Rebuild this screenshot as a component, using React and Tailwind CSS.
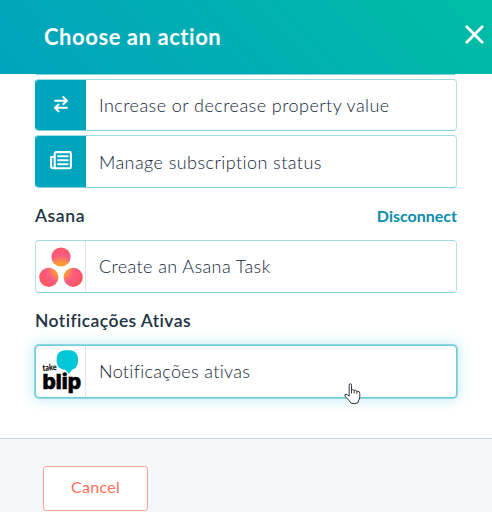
import React from "react";

function SwapIcon() {
  return (
    <svg className="mb-[3px]" width="16" height="20" viewBox="0 0 16 20" fill="none" stroke="#fff" strokeWidth="1.9" strokeLinecap="round" strokeLinejoin="round">
      <path d="M2 6.7H14M10.2 3L14 6.7L10.2 10.2M14 13.8H2M5.6 10.6L1.8 13.8L5.6 17.4" />
    </svg>
  );
}

function NewsIcon() {
  return (
    <svg className="mb-[3px]" width="22" height="19" viewBox="0 0 22 19" fill="none" stroke="#fff" strokeWidth="2.1" strokeLinejoin="round">
      <rect x="4.7" y="1.1" width="16.2" height="16.2" rx="1.4" />
      <path d="M4.6 6H1.1V15.6Q1.1 17.3 3 17.3H6" />
      <path d="M7.2 5.2H18.5M7.2 9.2H18.5M7.2 13.2H18.5" strokeWidth="2" />
    </svg>
  );
}

function AsanaLogo() {
  return (
    <svg width="44" height="40" viewBox="0 0 44 40">
      <defs>
        <radialGradient id="asana" gradientUnits="userSpaceOnUse" cx="22" cy="22" r="25">
          <stop offset="0" stopColor="#ffb020" />
          <stop offset="0.25" stopColor="#fd9a38" />
          <stop offset="0.55" stopColor="#f95c82" />
          <stop offset="1" stopColor="#fb5458" />
        </radialGradient>
      </defs>
      <g fill="url(#asana)">
        <circle cx="22" cy="10" r="9.6" />
        <circle cx="9.8" cy="30.3" r="9.6" />
        <circle cx="34.2" cy="30.3" r="9.6" />
      </g>
    </svg>
  );
}

function BlipLogo() {
  return (
    <svg width="46" height="48" viewBox="0 0 46 48">
      <path d="M29.3 2.3C37 2.3 40 4.8 40 12C40 17.8 38 20.6 34.3 21.6L31 25.8L27.3 22C21 21 18.6 18 18.6 12C18.6 4.8 21.6 2.3 29.3 2.3Z" fill="#00c6d7" />
      <text x="4.8" y="23" fontFamily="Lato, sans-serif" fontSize="9" fontWeight="900" textLength="14" lengthAdjust="spacingAndGlyphs" transform="rotate(-5 5 23)">take</text>
      <text x="4.5" y="40.5" fontFamily="Inter, sans-serif" fontSize="20.5" fontWeight="800" stroke="#000" strokeWidth="0.6" textLength="38.5" lengthAdjust="spacingAndGlyphs">blip</text>
    </svg>
  );
}

function ActionRow({ icon, label, spacing, filled = false, active = false, className = "" }) {
  return (
    <button
      className={`flex h-[53px] w-[422px] shrink-0 items-stretch overflow-hidden rounded-[4px] border bg-white text-left ${
        active
          ? "border-[#70cddb] shadow-[0_0_0_1px_#8fd7e2,0_0_13px_2px_#c5edf2]"
          : filled
            ? "border-t-[#a0dce6] border-r-[#b2e3eb] border-b-[#7fd1de] border-l-[#00a4bd]"
            : "border-x-[#b2e3eb] border-t-[#a0dce6] border-b-[#7fd1de]"
      } ${className}`}
    >
      <span className={`flex w-[50px] shrink-0 items-center justify-center ${filled ? "bg-[#00a4bd]" : "border-r border-[#dfe3eb]"}`}>
        {icon}
      </span>
      <span className={`flex items-center pl-[13px] text-[18px] font-light text-[#14263a] ${spacing}`}>{label}</span>
    </button>
  );
}

export default function App() {
  return (
    <div className="flex h-[512px] w-[492px] flex-col overflow-hidden bg-white font-[Lato,sans-serif]">
      <header className="flex h-[74px] shrink-0 items-center justify-between bg-[linear-gradient(45deg,#00a4bd_0%,#00afb2_50%,#00bda5_100%)] pr-[8px] pl-[44px]">
        <h1 className="mb-px text-[22px] font-bold tracking-[0.55px] text-white">Choose an action</h1>
        <svg className="mb-[6px]" width="19" height="19" viewBox="0 0 19 19" stroke="#fff" strokeWidth="2.8" strokeLinecap="round">
          <path d="M1.8 1.8L17.2 17.2M17.2 1.8L1.8 17.2" />
        </svg>
      </header>
      <main className="flex h-[364px] shrink-0 flex-col pl-[35px]">
        <div className="ml-px h-px w-[419px] shrink-0 bg-[#7fd1de]" />
        <ActionRow filled className="mt-[4px] h-[52px]!" icon={<SwapIcon />} label="Increase or decrease property value" spacing="tracking-[0.45px]" />
        <ActionRow filled className="mt-[4px]" icon={<NewsIcon />} label="Manage subscription status" spacing="tracking-[0.43px] pt-px" />
        <div className="flex h-[52px] w-[422px] shrink-0 items-center justify-between pt-[4px]">
          <h2 className="text-[17.5px] font-semibold tracking-[0.6px] text-[#213343]">Asana</h2>
          <a className="text-[16px] font-bold text-[#0b8cab]">Disconnect</a>
        </div>
        <ActionRow icon={<AsanaLogo />} label="Create an Asana Task" spacing="tracking-[0.4px]" />
        <div className="flex h-[52px] shrink-0 items-center pt-[5px]">
          <h2 className="text-[17.5px] font-semibold tracking-[0.42px] text-[#213343]">Notificações Ativas</h2>
        </div>
        <div className="relative w-[422px]">
          <ActionRow active icon={<BlipLogo />} label="Notificações ativas" spacing="tracking-[0.33px]" />
          <svg className="absolute top-[38px] left-[309px]" width="17" height="22" viewBox="0 0 17 22" fill="#fff" stroke="#30343b" strokeWidth="1" strokeLinejoin="round">
            <path d="M5.2 13V2.2Q5.2 .7 6.3 .7Q7.5 .7 7.5 2.2V7.2Q8.8 5.7 10.2 7.5Q11.8 6.3 12.8 8.2Q15.8 7.6 15.8 10.5V14Q15.8 16 14.2 18V19.5Q11 21.8 6.8 20Q5.2 17.5 3.5 15.8L1 13.2Q.2 11.4 2 11.2Q3.5 11.5 5.2 13Z" />
            <path d="M7.5 7V10.5M10.2 7.5V10.5M12.8 8.2V10.8" />
          </svg>
        </div>
      </main>
      <footer className="flex h-[74px] shrink-0 items-start border-t border-[#cbd6e2] bg-[#f5f8fa] pt-[27px] pl-[43px]">
        <button className="h-[45px] w-[105px] rounded-[3px] border border-[#ffa390] bg-white pb-[3px] text-[16px] tracking-[0.3px] text-[#ff6f55]">Cancel</button>
      </footer>
    </div>
  );
}
